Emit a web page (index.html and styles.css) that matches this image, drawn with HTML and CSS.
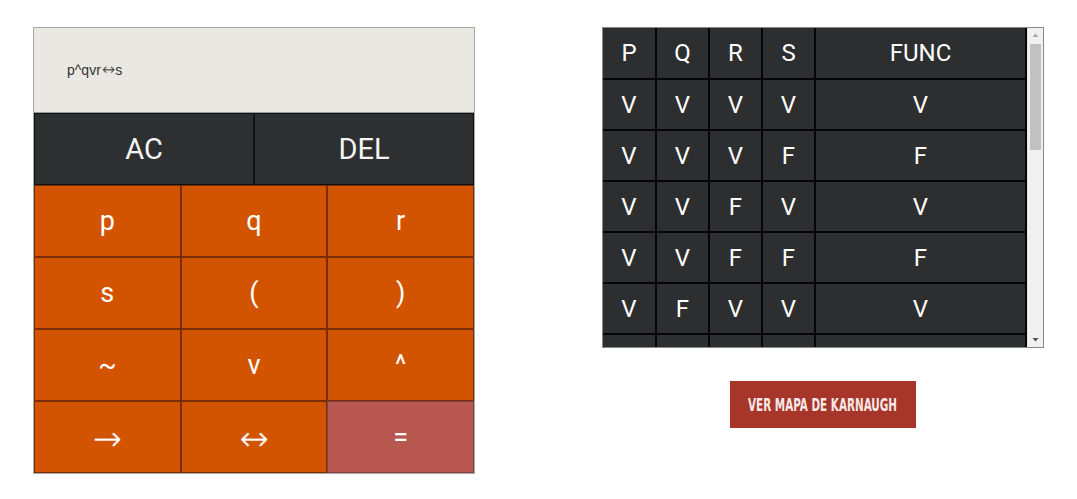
FILE: index.html
```html
<!DOCTYPE html>
<html lang="es">
<head>
<meta charset="utf-8">
<title>Calculadora lógica</title>
<link rel="stylesheet" href="styles.css">
</head>
<body>
<div class="page">
  <div class="calc">
    <div class="display">p^qvr<span class="op">↔</span>s</div>
    <div class="top-row">
      <button class="key dark">AC</button>
      <button class="key dark">DEL</button>
    </div>
    <div class="keys">
      <button class="key">p</button>
      <button class="key">q</button>
      <button class="key">r</button>
      <button class="key">s</button>
      <button class="key">(</button>
      <button class="key">)</button>
      <button class="key">~</button>
      <button class="key">v</button>
      <button class="key">^</button>
      <button class="key arrow">→</button>
      <button class="key arrow">↔</button>
      <button class="key equals">=</button>
    </div>
  </div>
  <div class="side">
    <div class="table-box">
      <div class="table-scroll">
        <table class="truth">
          <thead>
            <tr><th>P</th><th>Q</th><th>R</th><th>S</th><th class="func">FUNC</th></tr>
          </thead>
          <tbody>
            <tr><td>V</td><td>V</td><td>V</td><td>V</td><td>V</td></tr>
            <tr><td>V</td><td>V</td><td>V</td><td>F</td><td>F</td></tr>
            <tr><td>V</td><td>V</td><td>F</td><td>V</td><td>V</td></tr>
            <tr><td>V</td><td>V</td><td>F</td><td>F</td><td>F</td></tr>
            <tr><td>V</td><td>F</td><td>V</td><td>V</td><td>V</td></tr>
            <tr><td>V</td><td>F</td><td>V</td><td>F</td><td>F</td></tr>
            <tr><td>V</td><td>F</td><td>F</td><td>V</td><td>F</td></tr>
            <tr><td>V</td><td>F</td><td>F</td><td>F</td><td>V</td></tr>
            <tr><td>F</td><td>V</td><td>V</td><td>V</td><td>V</td></tr>
            <tr><td>F</td><td>V</td><td>V</td><td>F</td><td>F</td></tr>
            <tr><td>F</td><td>V</td><td>F</td><td>V</td><td>F</td></tr>
            <tr><td>F</td><td>V</td><td>F</td><td>F</td><td>V</td></tr>
            <tr><td>F</td><td>F</td><td>V</td><td>V</td><td>V</td></tr>
            <tr><td>F</td><td>F</td><td>V</td><td>F</td><td>F</td></tr>
            <tr><td>F</td><td>F</td><td>F</td><td>V</td><td>F</td></tr>
            <tr><td>F</td><td>F</td><td>F</td><td>F</td><td>V</td></tr>
          </tbody>
        </table>
      </div>
      <div class="scrollbar" aria-hidden="true">
        <svg class="sb-arrow" width="15" height="14" viewBox="0 0 15 14"><path d="M4.5 9 L7.5 5.5 L10.5 9 Z" fill="#a8a8a8"/></svg>
        <div class="sb-track">
          <div class="sb-thumb"></div>
        </div>
        <svg class="sb-arrow" width="15" height="14" viewBox="0 0 15 14"><path d="M4.5 5 L7.5 8.5 L10.5 5 Z" fill="#505050"/></svg>
      </div>
    </div>
    <button class="kmap"><span class="kmap-label">VER MAPA DE KARNAUGH</span></button>
  </div>
</div>
</body>
</html>
```

FILE: styles.css
```css
* { box-sizing: border-box; }

html, body {
  margin: 0;
  padding: 0;
  background: #ffffff;
}

.page {
  display: flex;
  align-items: flex-start;
  gap: 127px;
  padding: 27px 0 0 33px;
  font-family: Roboto, "Liberation Sans", sans-serif;
}

.calc {
  width: 442px;
  border: 1px solid #a9a9a9;
  display: flex;
  flex-direction: column;
}

.display {
  height: 85px;
  background: #eae8e3;
  border-bottom: 1px solid #9a9a9a;
  display: flex;
  align-items: center;
  padding-left: 33px;
  font-family: "Liberation Sans", Arial, sans-serif;
  font-size: 14px;
  color: #333333;
}

.display .op {
  font-family: "DejaVu Sans", sans-serif;
  font-size: 16px;
  line-height: 14px;
  margin: 0 0 0 1px;
  -webkit-text-stroke: 0.3px #eae8e3;
}

.top-row {
  display: grid;
  grid-template-columns: 1fr 1fr;
}

.keys {
  display: grid;
  grid-template-columns: repeat(3, 1fr);
}

.key {
  height: 72px;
  margin: 0;
  border: 1px solid #7a2c06;
  background: #d35400;
  color: #ffffff;
  font-family: Roboto, "Liberation Sans", sans-serif;
  font-size: 27px;
  padding: 0;
  cursor: pointer;
}

.key.arrow {
  font-family: "DejaVu Sans", sans-serif;
  font-weight: 400;
  font-size: 36px;
  line-height: 1;
  padding-top: 4px;
  -webkit-text-stroke: 0.8px #d35400;
}

.key.dark {
  background: #2d2f31;
  border: 1px solid #111111;
  font-size: 29px;
  color: #f4f4f4;
}

.key.equals {
  background: #b85650;
  border-color: #7d4544;
}

.side {
  display: flex;
  flex-direction: column;
  align-items: center;
  gap: 33px;
}

.table-box {
  width: 442px;
  height: 321px;
  border: 1px solid #8a8a8a;
  display: flex;
  background: #2d2e30;
}

.table-scroll {
  flex: 1;
  overflow: hidden;
}

.scrollbar {
  width: 16px;
  display: flex;
  flex-direction: column;
  background: #f0f0f0;
  border-left: 1px solid #e4e4e4;
}

.sb-arrow {
  display: block;
  flex: none;
}

.sb-track {
  flex: 1;
  padding: 2px 2px 0 2px;
}

.sb-thumb {
  height: 106px;
  background: #c1c1c1;
}

.truth {
  width: 100%;
  border-collapse: collapse;
  table-layout: fixed;
  color: #ffffff;
  font-family: Roboto, "Liberation Sans", sans-serif;
  font-size: 24px;
}

.truth th,
.truth td {
  width: 53px;
  height: 51px;
  border: 2px solid #050505;
  background: #2d2e30;
  text-align: center;
  font-weight: 400;
  padding: 0;
}

.truth tr:first-child th { border-top: 0; }
.truth th:first-child, .truth td:first-child { border-left: 0; }

.truth th.func {
  width: auto;
}

.kmap {
  width: 186px;
  height: 47px;
  border: 0;
  margin: 0;
  padding: 0;
  background: #a8352a;
  color: #f5e9e6;
  display: flex;
  align-items: center;
  justify-content: center;
  overflow: hidden;
  cursor: pointer;
}

.kmap-label {
  display: inline-block;
  font-family: "DejaVu Sans Condensed", "DejaVu Sans", sans-serif;
  font-weight: 700;
  font-size: 17px;
  white-space: nowrap;
  transform: scaleX(0.68);
  flex: none;
}
```
